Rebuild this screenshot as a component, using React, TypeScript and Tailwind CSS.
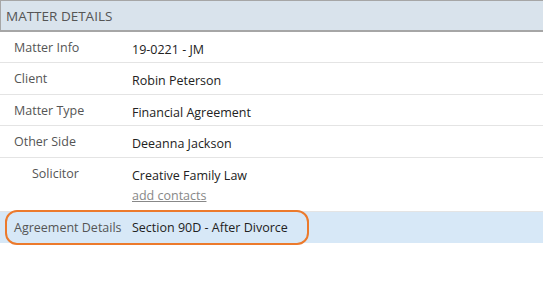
const rows: { label: string; value: string; h: string; indent?: boolean; extra?: string }[] = [
  { label: "Matter Info", value: "19-0221 - JM", h: "h-[31px]" },
  { label: "Client", value: "Robin Peterson", h: "h-[32px]" },
  { label: "Matter Type", value: "Financial Agreement", h: "h-[31px]" },
  { label: "Other Side", value: "Deeanna Jackson", h: "h-[32px]" },
  { label: "Solicitor", value: "Creative Family Law", h: "h-[54px]", indent: true, extra: "add contacts" },
];

export default function App() {
  return (
    <div className="h-[296px] w-[543px] bg-white text-[12.5px] leading-[18px] [font-family:'Open_Sans',sans-serif]">
      <div className="flex h-[32px] items-center border-t border-l border-b-2 border-[#a6a6a6] bg-[#d9e3ec] pl-[5px] text-[13.5px] text-[#555]">
        MATTER DETAILS
      </div>
      {rows.map((r) => (
        <div key={r.label} className={`flex items-start border-b border-[#e4e4e4] ${r.h}`}>
          <div className={`w-[132px] shrink-0 pt-[7px] text-[#555] ${r.indent ? "pl-[32px]" : "pl-[14px]"}`}>{r.label}</div>
          <div className="pt-[9px] text-[#222]">
            <div>{r.value}</div>
            {r.extra && <div className="mt-[2px] text-[#888] underline">{r.extra}</div>}
          </div>
        </div>
      ))}
      <div className="relative flex h-[31px] items-center bg-[#d7e8f7]">
        <div className="w-[132px] shrink-0 pl-[14px] text-[#555]">Agreement Details</div>
        <div className="text-[#222]">Section 90D - After Divorce</div>
        <div className="pointer-events-none absolute left-[5px] top-[-2px] h-[35px] w-[304px] rounded-[12px] border-2 border-[#ec7a2c]" />
      </div>
    </div>
  );
}
